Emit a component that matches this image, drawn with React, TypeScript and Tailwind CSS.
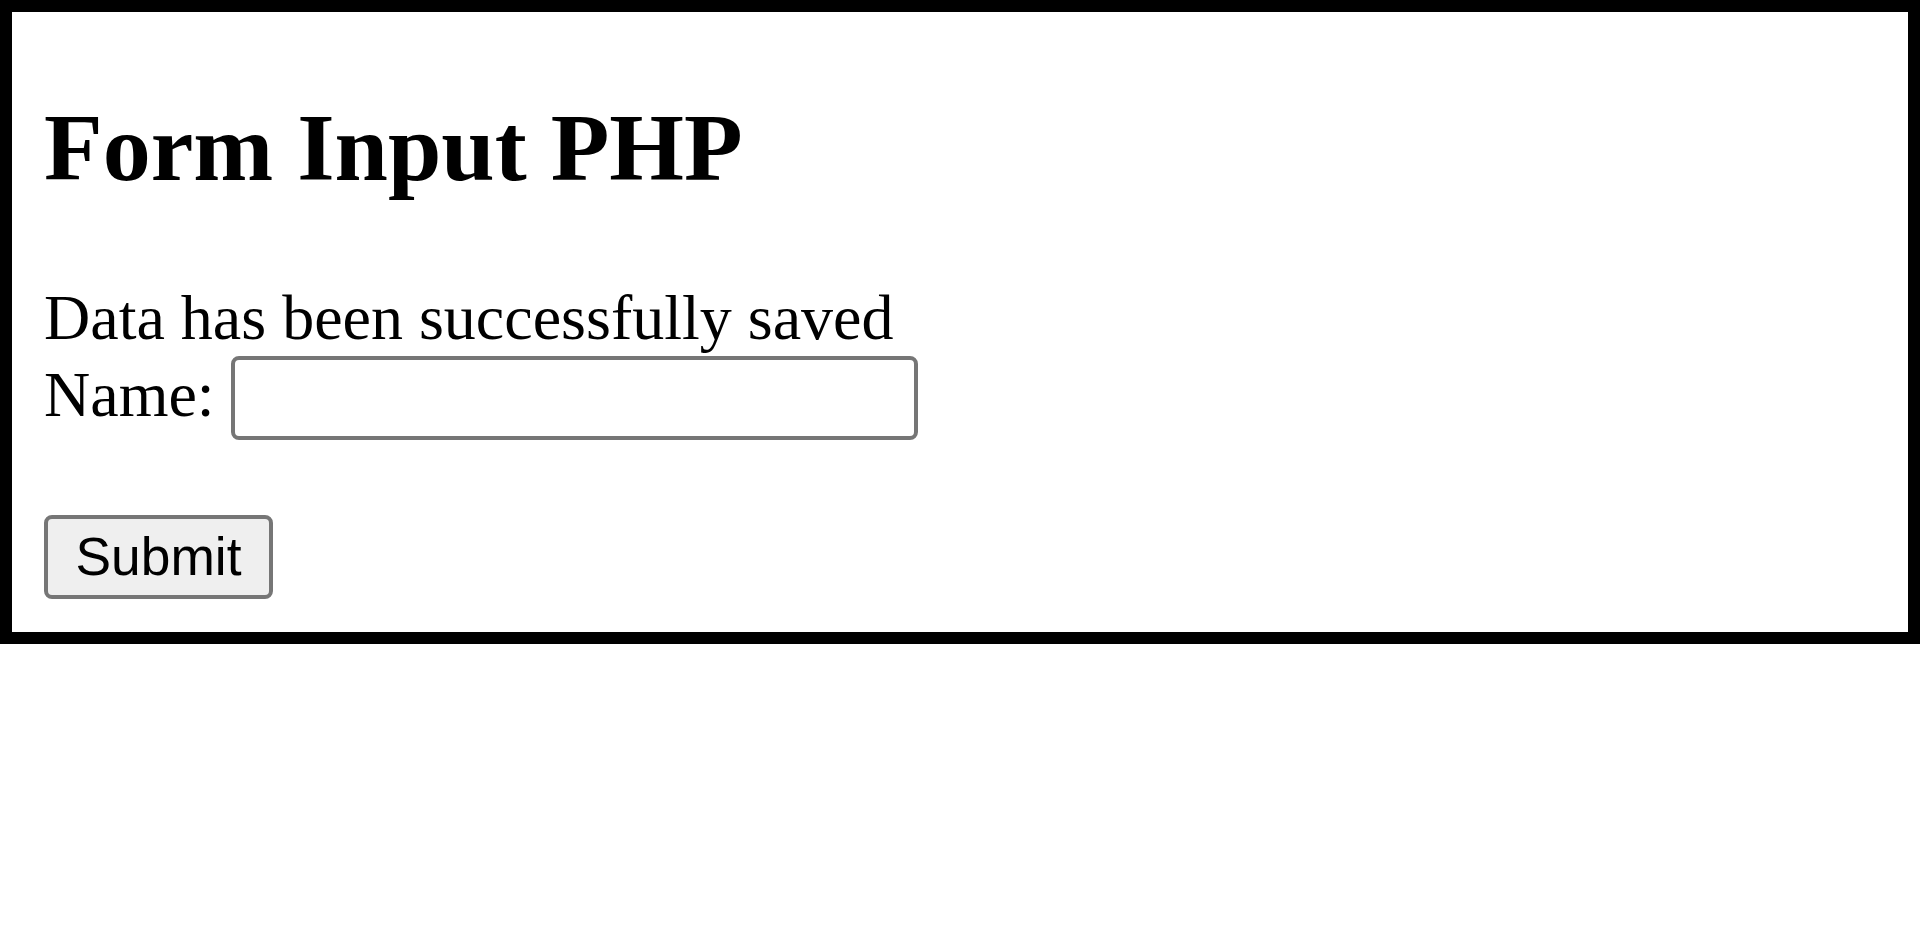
import React from "react";

export default function App() {
  return (
    <div className="w-[1920px] h-[931px] bg-white">
      <div className="border-[12px] border-black pl-[32px] pb-[33px] text-black [font-family:'Liberation_Serif','Times_New_Roman',serif]">
        <h1 className="mt-[82px] text-[96px] leading-[107px] font-bold">Form Input PHP</h1>
        <div className="mt-[80px] text-[64px] leading-[74px]">Data has been successfully saved</div>
        <div className="mt-[1px] flex items-start">
          <span className="mt-[2px] text-[64px] leading-[74px]">Name:</span>
          <input
            type="text"
            className="ml-[16px] w-[687px] h-[84px] border-[4px] border-[#767676] rounded-[8px] bg-white px-[8px] text-[53px] outline-none [font-family:'Liberation_Sans',Arial,sans-serif]"
          />
        </div>
        <button
          type="button"
          className="mt-[75px] block w-[229px] h-[84px] border-[4px] border-[#767676] rounded-[8px] bg-[#efefef] text-[53.33px] leading-[60px] text-black [font-family:'Liberation_Sans',Arial,sans-serif]"
        >
          Submit
        </button>
      </div>
    </div>
  );
}
